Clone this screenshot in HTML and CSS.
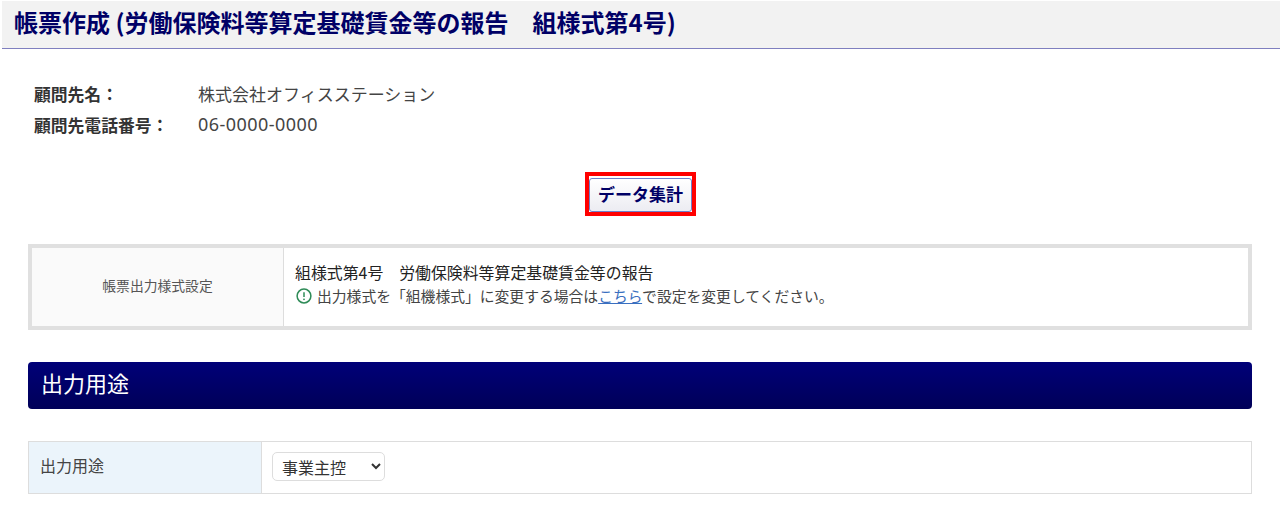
FILE: index.html
```html
<!DOCTYPE html>
<html lang="ja">
<head>
    <meta charset="UTF-8">
    <title>帳票作成</title>
    <link rel="stylesheet" href="styles.css">
</head>
<body>
    <h1 class="page-title">帳票作成 (労働保険料等算定基礎賃金等の報告　組様式第4号)</h1>

    <dl class="client">
        <div class="client-row">
            <dt>顧問先名：</dt>
            <dd>株式会社オフィスステーション</dd>
        </div>
        <div class="client-row">
            <dt>顧問先電話番号：</dt>
            <dd class="client-tel">06-0000-0000</dd>
        </div>
    </dl>

    <div class="action">
        <div class="highlight">
            <button class="button" type="button">データ集計</button>
        </div>
    </div>

    <div class="format-box">
        <div class="format-label">帳票出力様式設定</div>
        <div class="format-body">
            <p class="format-name">組様式第4号　労働保険料等算定基礎賃金等の報告</p>
            <p class="format-note">
                <svg class="note-icon" viewBox="0 0 16 16" width="16" height="16" aria-hidden="true">
                    <circle cx="8" cy="8" r="6.9" fill="none" stroke="#2e8b57" stroke-width="1.5"/>
                    <path d="M8 4.2v4.8" fill="none" stroke="#2e8b57" stroke-width="1.5"/>
                    <circle cx="8" cy="11.3" r="0.9" fill="#2e8b57"/>
                </svg>
                <span>出力様式を「組機様式」に変更する場合は<a href="#">こちら</a>で設定を変更してください。</span>
            </p>
        </div>
    </div>

    <h2 class="section-title">出力用途</h2>

    <div class="form-row">
        <div class="form-label">出力用途</div>
        <div class="form-field">
            <select class="select">
                <option>事業主控</option>
            </select>
        </div>
    </div>
</body>
</html>
```

FILE: styles.css
```css
html, body {
    height: 508px;
    overflow: hidden;
}

body {
    margin: 0;
    padding: 1px 0 0 2px;
    box-sizing: border-box;
    background-color: #fff;
    color: #333;
    font-family: "Noto Sans CJK JP", "Noto Sans", sans-serif;
    font-size: 14px;
}

.page-title {
    margin: 0;
    height: 48px;
    box-sizing: border-box;
    padding-left: 12px;
    background-color: #f2f2f2;
    border-bottom: 1px solid #7f7fbf;
    color: #000066;
    font-size: 24px;
    font-weight: 700;
    line-height: 42px;
}

.client {
    margin: 29px 0 0 32px;
}

.client-row {
    display: flex;
    height: 31px;
    align-items: center;
}

.client-row dt {
    width: 164px;
    font-size: 16.8px;
    font-weight: 700;
}

.client-row dd {
    margin: 0;
    font-size: 17px;
    color: #444;
}

.client-row .client-tel {
    padding-bottom: 2px;
    font-family: "Noto Sans", sans-serif;
    font-size: 18px;
    letter-spacing: 0.45px;
}

.action {
    display: flex;
    justify-content: center;
    margin-top: 32px;
    padding-right: 1px;
}

.highlight {
    border: 4px solid #ff0000;
    padding-top: 2px;
    height: 34px;
}

.button {
    display: block;
    width: 103px;
    height: 34px;
    padding: 0 0 3px;
    background: linear-gradient(#fff, #ececf2);
    border: 1px solid #6f7fc8;
    border-radius: 3px;
    color: #000066;
    font-family: inherit;
    font-size: 17px;
    font-weight: 700;
}

.format-box {
    display: flex;
    margin: 28px 26px 0;
    width: 1224px;
    height: 86px;
    box-sizing: border-box;
    border: 4px solid #e0e0e0;
}

.format-label {
    display: flex;
    width: 252px;
    align-items: center;
    justify-content: center;
    padding-bottom: 5px;
    box-sizing: border-box;
    background-color: #fafafa;
    border-right: 1px solid #ddd;
    font-size: 13.8px;
    color: #555;
}

.format-body {
    padding: 13px 0 0 11px;
}

.format-name {
    margin: 0;
    font-size: 15.9px;
    line-height: 24px;
    color: #222;
}

.format-note {
    display: flex;
    align-items: center;
    gap: 5px;
    margin: 0 0 0 1px;
    font-size: 14.8px;
    line-height: 22px;
    color: #444;
}

.format-note a {
    color: #3a6fc0;
}

.section-title {
    margin: 32px 0 0 26px;
    width: 1224px;
    height: 47px;
    box-sizing: border-box;
    padding-left: 13px;
    background: linear-gradient(#000078, #000058);
    border-radius: 4px;
    color: #fff;
    font-size: 22px;
    font-weight: 400;
    line-height: 40px;
}

.form-row {
    display: flex;
    margin: 32px 0 0 26px;
    width: 1224px;
    height: 53px;
    box-sizing: border-box;
    border: 1px solid #ddd;
}

.form-label {
    display: flex;
    width: 233px;
    align-items: center;
    padding: 0 0 6px 11px;
    box-sizing: border-box;
    background-color: #ebf4fb;
    border-right: 1px solid #ddd;
    font-size: 16px;
    color: #444;
}

.form-field {
    display: flex;
    align-items: center;
    padding: 0 0 2px 10px;
}

.select {
    width: 113px;
    height: 29px;
    padding-left: 5px;
    background-color: #fff;
    border: 1px solid #ddd;
    border-radius: 5px;
    color: #333;
    font-family: inherit;
    font-size: 16px;
}
```
